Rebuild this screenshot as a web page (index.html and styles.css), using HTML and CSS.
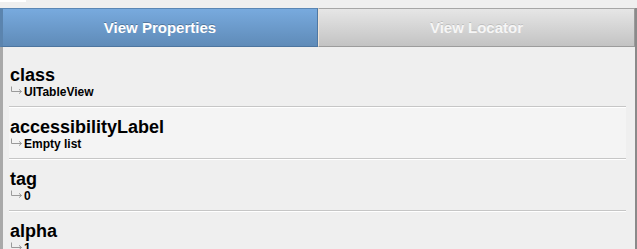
FILE: index.html
```html
<!DOCTYPE html>
<html>
<head>
<meta charset="utf-8">
<link rel="stylesheet" href="styles.css">
</head>
<body>
<div class="top"><div class="glint"></div></div>
<div class="main">
  <div class="tabs">
    <div class="tab active">View Properties</div>
    <div class="tab">View Locator</div>
  </div>
  <div class="list">
    <div class="row">
      <div class="name">class</div>
      <div class="value"><svg class="arrow" width="13" height="10" viewBox="0 0 13 10"><path d="M1.5 0.5V5.5H11.5M9 3.3L11.5 5.5L9 7.7" fill="none" stroke="#9a9a9a" stroke-width="1"/></svg>UITableView</div>
    </div>
    <div class="row hl">
      <div class="name">accessibilityLabel</div>
      <div class="value"><svg class="arrow" width="13" height="10" viewBox="0 0 13 10"><path d="M1.5 0.5V5.5H11.5M9 3.3L11.5 5.5L9 7.7" fill="none" stroke="#9a9a9a" stroke-width="1"/></svg>Empty list</div>
    </div>
    <div class="row">
      <div class="name">tag</div>
      <div class="value"><svg class="arrow" width="13" height="10" viewBox="0 0 13 10"><path d="M1.5 0.5V5.5H11.5M9 3.3L11.5 5.5L9 7.7" fill="none" stroke="#9a9a9a" stroke-width="1"/></svg>0</div>
    </div>
    <div class="row">
      <div class="name">alpha</div>
      <div class="value"><svg class="arrow" width="13" height="10" viewBox="0 0 13 10"><path d="M1.5 0.5V5.5H11.5M9 3.3L11.5 5.5L9 7.7" fill="none" stroke="#9a9a9a" stroke-width="1"/></svg>1</div>
    </div>
  </div>
</div>
</body>
</html>
```
FILE: styles.css
```css
html, body {
  margin: 0;
  padding: 0;
  background: #efefef;
  font-family: "Liberation Sans", Arial, sans-serif;
  height: 249px;
  overflow: hidden;
}
.top {
  height: 8px;
  background: #efefef;
}
.glint {
  width: 26px;
  height: 2px;
  background: #ffffff;
}
.main {
  border-right: 2px solid #8a8a8a;
  height: 241px;
  box-sizing: border-box;
  display: flex;
  flex-direction: column;
  overflow: hidden;
}
.tabs {
  display: flex;
  height: 39px;
  flex-shrink: 0;
}
.tab {
  flex: 1;
  display: flex;
  align-items: center;
  justify-content: center;
  font-size: 15px;
  font-weight: bold;
  color: #f6f6f6;
  box-sizing: border-box;
  border-top: 1px solid #a6a6a6;
  border-bottom: 1px solid #9c9c9c;
  background: linear-gradient(#e6e6e6, #c3c3c3);
  text-shadow: 0 -1px 0 rgba(0,0,0,0.12);
  border-left: 1px solid #eee3d6;
  border-right: 1px solid #9a9a9a;
}
.tab.active {
  flex: 0 0 318px;
  color: #ffffff;
  background: linear-gradient(#78aade, #5f8bb8);
  border-top: 1px solid #5a86b4;
  border-bottom: 1px solid #4d759f;
  border-left: 3px solid #5b84ae;
  border-right: 1px solid #4f78a3;
  text-shadow: 0 -1px 0 rgba(0,0,0,0.25);
}
.list {
  flex: 1 1 auto;
  min-height: 0;
  padding: 9px 9px 0 6px;
  border-style: solid;
  border-width: 0 0 0 3px;
  border-image: linear-gradient(90deg, #a9a9a9, #d6d6d6) 1;
}
.row {
  padding: 9px 0 7px 1px;
  border-bottom: 1px solid #c6c6c6;
  margin-bottom: 1px;
  box-shadow: 0 1px 0 #ffffff;
}
.row.hl {
  background: #f4f4f4;
}
.name {
  font-size: 18px;
  line-height: 20px;
  font-weight: bold;
  color: #000;
}
.value {
  font-size: 12px;
  line-height: 14px;
  font-weight: bold;
  color: #000;
}
.arrow {
  display: inline-block;
  vertical-align: 0;
  margin-right: 1px;
}
```
